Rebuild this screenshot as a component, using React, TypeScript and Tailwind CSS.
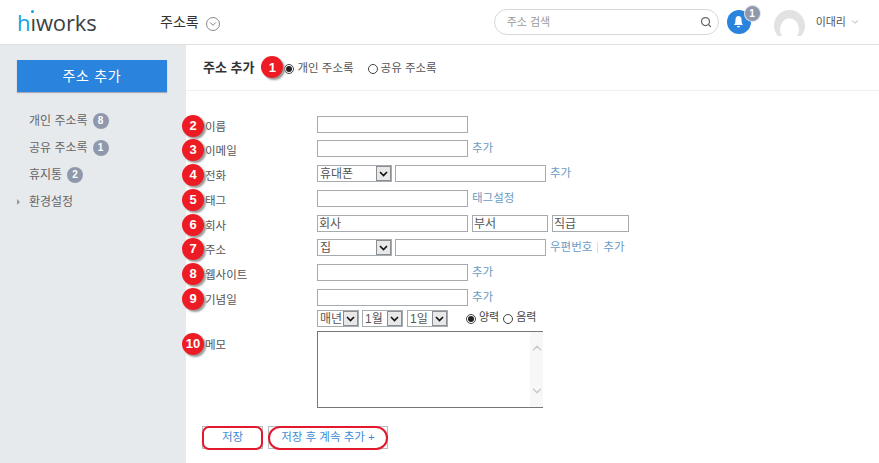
import { ChevronDown, Search } from "lucide-react";
import type { ReactNode } from "react";

const font = "font-['Liberation_Sans','Noto_Sans_CJK_KR',sans-serif]";

const NumBadge = ({ n, className = "" }: { n: number; className?: string }) => (
  <span
    className={`absolute flex h-[22px] w-[22px] items-center justify-center rounded-full bg-[#ed1c24] text-[13px] font-bold text-white shadow-[2px_2px_2px_#999] ${className}`}
  >
    {n}
  </span>
);

const Count = ({ n }: { n: number }) => (
  <span className="ml-[5px] flex h-[16px] w-[16px] items-center justify-center rounded-full bg-[#9099ab] text-[10px] font-bold text-white">
    {n}
  </span>
);

const FakeInput = ({ w, value }: { w: string; value?: string }) => (
  <div className={`box-border flex h-[17px] items-center overflow-hidden border border-[#a6abb0] bg-white pl-px text-[12px] leading-none text-[#555] ${w}`}>
    {value}
  </div>
);

const Arrow = () => (
  <span className="flex h-full w-[15px] items-center justify-center border border-[#8b8f93] bg-[#e8e8e8]">
    <svg width="9" height="6" viewBox="0 0 9 6">
      <path d="M1 1l3.500 3.500L8 1" fill="none" stroke="#111" strokeWidth="1.6" />
    </svg>
  </span>
);

const FakeSelect = ({ w, value }: { w: string; value: string }) => (
  <div className={`box-border flex h-[17px] items-center justify-between border border-[#a6abb0] bg-white pl-[2px] text-[12px] leading-none text-[#555] ${w}`}>
    <span>{value}</span>
    <Arrow />
  </div>
);

const LinkText = ({ children, className = "" }: { children: ReactNode; className?: string }) => (
  <span className={`text-[11.5px] leading-none text-[#6b9bc3] ${className}`}>{children}</span>
);

const Radio = ({ on }: { on?: boolean }) => (
  <span className="flex h-[10px] w-[10px] items-center justify-center rounded-full border border-[#444] bg-white">
    {on && <span className="h-[6px] w-[6px] rounded-full bg-[#222]" />}
  </span>
);

interface RowProps {
  n: number;
  label: string;
  h: string;
  children: ReactNode;
}

const Row = ({ n, label, h, children }: RowProps) => (
  <div className={`relative flex items-start ${h}`}>
    <NumBadge n={n} className="left-[-4px] top-[-1px]" />
    <span className="mt-[4px] w-[131px] pl-[19px] text-[11.5px] leading-[14px] text-[#555]">{label}</span>
    <div className="flex items-center gap-[4px]">{children}</div>
  </div>
);

const SaveButton = ({ w, rounded, children }: { w: string; rounded: string; children: ReactNode }) => (
  <button className={`relative flex h-[23px] items-center justify-center border border-[#b8bcc0] bg-white ${w}`}>
    {children}
    <span className={`absolute inset-x-[-1px] bottom-[-2px] top-[-1px] border-2 border-[#e3182d] ${rounded}`} />
  </button>
);

export default function App() {
  return (
    <div className={`flex h-[463px] w-[879px] flex-col overflow-hidden bg-white ${font}`}>
      {/* top bar */}
      <header className="flex h-[45px] shrink-0 items-center border-b border-[#e0e0e0] bg-white">
        <div className="relative ml-[17px] w-[143px] font-['Open_Sans',sans-serif] text-[22px] font-medium leading-none tracking-[-0.1px] text-[#3c3f44]">
          <span className="text-[#12a0e8]">h</span>
          <span className="relative">
            ı
            <span className="absolute left-[1px] top-[3px] h-[3px] w-[3px] rounded-full bg-[#12a0e8]" />
          </span>
          works
        </div>
        <span className="text-[14px] text-[#333]">주소록</span>
        <span className="ml-[7px] mt-[3px] flex h-[14px] w-[14px] items-center justify-center rounded-full border border-[#888]">
          <ChevronDown size={10} className="text-[#666]" />
        </span>
        <div className="ml-[auto] flex items-center">
          <div className="flex h-[26px] w-[225px] items-center justify-between rounded-[13px] border border-[#d5d8da] pl-[12px] pr-[6px]">
            <span className="text-[11px] text-[#999]">주소 검색</span>
            <Search size={12} strokeWidth={2.5} className="text-[#666]" />
          </div>
          <div className="relative ml-[8px] flex h-[24px] w-[24px] items-center justify-center rounded-full bg-[#2a83dc]">
            <svg width="11" height="12" viewBox="0 0 11 12">
              <path d="M5.500 0C3.500 0 2.500 1.500 2.500 3.500L2.200 7 1 9h9L8.800 7 8.500 3.500C8.500 1.500 7.500 0 5.500 0zM4 10h3a1.500 1.500 0 0 1-3 0z" fill="#fff" />
            </svg>
            <span className="absolute left-[18px] top-[-4px] flex h-[15px] w-[15px] items-center justify-center rounded-full bg-[#9099ab] text-[10px] font-bold text-white ring-1 ring-[#dfe2e8]">
              1
            </span>
          </div>
          <svg width="31" height="30" viewBox="0 0 31 30" className="ml-[23px]">
            <path d="M4 29A15.500 15.500 0 1 1 27 29L23 29A9.500 11 0 1 0 8 29z" fill="#e2e2e2" />
          </svg>
          <span className="ml-[11px] text-[11px] text-[#555]">이대리</span>
          <ChevronDown size={10} className="ml-[4px] mr-[19px] text-[#9aa]" />
        </div>
      </header>

      <div className="flex min-h-0 flex-1">
        {/* sidebar */}
        <aside className="w-[186px] shrink-0 bg-[#e7eaed] px-[17px] pt-[15px]">
          <div className="flex h-[32px] w-[150px] items-center justify-center bg-[#2a83dc] text-[14px] tracking-[0.7px] text-white shadow-[0_1px_1px_#aab]">
            주소 추가
          </div>
          <ul className="mt-[15px] flex flex-col text-[12px] text-[#666]">
            <li className="flex h-[27px] items-center pl-[12px]">개인 주소록<Count n={8} /></li>
            <li className="flex h-[27px] items-center pl-[12px]">공유 주소록<Count n={1} /></li>
            <li className="flex h-[27px] items-center pl-[12px]">휴지통<Count n={2} /></li>
            <li className="relative flex h-[28px] items-center pl-[12px]">
              <span className="absolute left-0 top-[11px] border-y-[3px] border-l-[3px] border-y-transparent border-l-[#999]" />
              환경설정
            </li>
          </ul>
        </aside>

        {/* main */}
        <main className="flex-1">
          <div className="flex h-[46px] items-center border-b border-[#f0f0f0] pl-[17px]">
            <span className="mr-[30px] mt-[1px] text-[13px] font-bold text-[#333]">주소 추가</span>
            <div className="relative mt-[3px] flex items-center gap-[3px] text-[11.5px] text-[#555]">
              <NumBadge n={1} className="left-[-23px] top-[-4px]" />
              <Radio on />
              <span className="mr-[11px]">개인 주소록</span>
              <Radio />
              <span>공유 주소록</span>
            </div>
          </div>

          <div className="pt-[25px]">
            <div className="flex flex-col">
              <Row n={2} label="이름" h="h-[24px]"><FakeInput w="w-[151px]" /></Row>
              <Row n={3} label="이메일" h="h-[25px]"><FakeInput w="w-[151px]" /><LinkText>추가</LinkText></Row>
              <Row n={4} label="전화" h="h-[25px]">
                <FakeSelect w="w-[75px]" value="휴대폰" />
                <div className="-ml-px"><FakeInput w="w-[151px]" /></div>
                <LinkText>추가</LinkText>
              </Row>
              <Row n={5} label="태그" h="h-[25px]"><FakeInput w="w-[151px]" /><LinkText>태그설정</LinkText></Row>
              <Row n={6} label="회사" h="h-[24px]">
                <FakeInput w="w-[151px]" value="회사" />
                <FakeInput w="w-[76px]" value="부서" />
                <FakeInput w="w-[77px]" value="직급" />
              </Row>
              <Row n={7} label="주소" h="h-[25px]">
                <FakeSelect w="w-[75px]" value="집" />
                <div className="-ml-px"><FakeInput w="w-[151px]" /></div>
                <LinkText>우편번호</LinkText>
                <span className="ml-px h-[11px] border-l border-[#ddd]" />
                <LinkText className="ml-px">추가</LinkText>
              </Row>
              <Row n={8} label="웹사이트" h="h-[25px]"><FakeInput w="w-[151px]" /><LinkText>추가</LinkText></Row>
              <Row n={9} label="기념일" h="h-[21px]"><FakeInput w="w-[151px]" /><LinkText>추가</LinkText></Row>
              <div className="flex h-[21px] items-start pl-[131px]">
                <FakeSelect w="w-[42px]" value="매년" />
                <div className="ml-[3px]"><FakeSelect w="w-[41px]" value="1월" /></div>
                <div className="ml-[4px]"><FakeSelect w="w-[41px]" value="1일" /></div>
                <div className="ml-[18px] flex items-center gap-[3px] text-[11px] leading-[15px] text-[#444]">
                  <span className="mt-[3px]"><Radio on /></span>
                  <span className="mr-[1px]">양력</span>
                  <span className="mt-[3px]"><Radio /></span>
                  <span>음력</span>
                </div>
              </div>
              <div className="relative flex h-[77px]">
                <NumBadge n={10} className="left-[-4px] top-[2px]" />
                <span className="mt-[7px] w-[131px] pl-[19px] text-[11.5px] leading-[14px] text-[#555]">메모</span>
                <div className="box-border flex h-[77px] w-[226px] justify-end border border-r-0 border-[#767676] bg-white">
                  <div className="flex w-[13px] flex-col items-center justify-between bg-[#f7f7f7] py-[9px]">
                    <ChevronDown size={14} strokeWidth={2.5} className="rotate-180 text-[#c9c9c9]" />
                    <ChevronDown size={14} strokeWidth={2.5} className="text-[#c9c9c9]" />
                  </div>
                </div>
              </div>
            </div>
            <div className="ml-[16px] mt-[18px] flex items-start gap-[5px] text-[11.5px] text-[#3d8ad6]">
              <SaveButton w="w-[61px]" rounded="rounded-[7px]">저장</SaveButton>
              <SaveButton w="w-[120px]" rounded="rounded-[13px]">저장 후 계속 추가 +</SaveButton>
            </div>
          </div>
        </main>
      </div>
    </div>
  );
}
